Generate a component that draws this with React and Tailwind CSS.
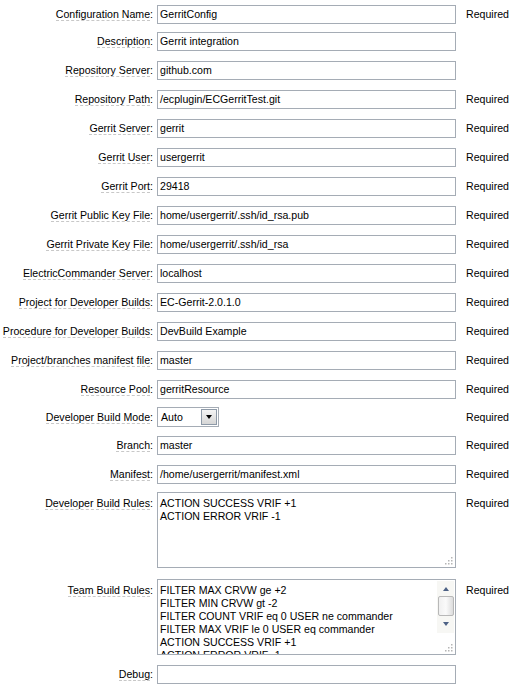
const rows = [
  { label: 'Configuration Name', value: 'GerritConfig', required: true, mt: 'mt-[5px]' },
  { label: 'Description', value: 'Gerrit integration', mt: 'mt-[8px]' },
  { label: 'Repository Server', value: 'github.com' },
  { label: 'Repository Path', value: '/ecplugin/ECGerritTest.git', required: true },
  { label: 'Gerrit Server', value: 'gerrit', required: true },
  { label: 'Gerrit User', value: 'usergerrit', required: true },
  { label: 'Gerrit Port', value: '29418', required: true },
  { label: 'Gerrit Public Key File', value: 'home/usergerrit/.ssh/id_rsa.pub', required: true },
  { label: 'Gerrit Private Key File', value: 'home/usergerrit/.ssh/id_rsa', required: true },
  { label: 'ElectricCommander Server', value: 'localhost', required: true },
  { label: 'Project for Developer Builds', value: 'EC-Gerrit-2.0.1.0', required: true },
  { label: 'Procedure for Developer Builds', value: 'DevBuild Example', required: true },
  { label: 'Project/branches manifest file', value: 'master', required: true },
  { label: 'Resource Pool', value: 'gerritResource', required: true },
  { label: 'Developer Build Mode', select: 'Auto', required: true, mt: 'mt-[8px]' },
  { label: 'Branch', value: 'master', required: true, mt: 'mt-[9px]' },
  { label: 'Manifest', value: '/home/usergerrit/manifest.xml', required: true },
]

const teamRules = [
  'FILTER MAX CRVW ge +2',
  'FILTER MIN CRVW gt -2',
  'FILTER COUNT VRIF eq 0 USER ne commander',
  'FILTER MAX VRIF le 0 USER eq commander',
  'ACTION SUCCESS VRIF +1',
  'ACTION ERROR VRIF -1',
]

export default function App() {
  return (
    <div
      className="w-[515px] h-[686px] bg-white text-black text-[10.6px] leading-[13px] overflow-hidden"
      style={{ fontFamily: '"Liberation Sans", Arial, sans-serif' }}
    >
      {rows.map((r) => (
        <Row key={r.label} label={r.label} required={r.required} className={r.mt || 'mt-[10px]'}>
          {r.select ? <Select value={r.select} /> : <Input value={r.value} />}
        </Row>
      ))}

      <Row label="Developer Build Rules" required top className="mt-[8px]">
        <div className="relative w-[299px] h-[76px] border border-[#a5acb5] px-[2px] pt-[4px]">
          <div>ACTION SUCCESS VRIF +1</div>
          <div>ACTION ERROR VRIF -1</div>
          <Grip />
        </div>
      </Row>

      <Row label="Team Build Rules" required top className="mt-[11px]">
        <div className="flex w-[299px] h-[76px] border border-[#a5acb5]">
          <div className="flex-1 overflow-hidden px-[2px] pt-[4px]">
            {teamRules.map((t) => (
              <div key={t} className="whitespace-nowrap">{t}</div>
            ))}
          </div>
          <div className="relative w-[18px] flex flex-col">
            <div className="mt-[1px] mr-[1px] h-[52px] bg-[#f7f7f4] flex flex-col items-center">
              <div className="h-[15px] flex items-center justify-center">
                <div className="w-0 h-0 border-x-[3px] border-x-transparent border-b-[4px] border-b-[#4d6185]" />
              </div>
              <div className="w-[16px] h-[20px] rounded-[2px] border border-[#b8b8b8] bg-gradient-to-r from-[#f0f0f0] via-[#fafafa] to-[#dcdcdc]" />
              <div className="h-[15px] flex items-center justify-center">
                <div className="w-0 h-0 border-x-[3px] border-x-transparent border-t-[4px] border-t-[#4d6185]" />
              </div>
            </div>
            <Grip />
          </div>
        </div>
      </Row>

      <Row label="Debug" className="mt-[10px]">
        <Input value="" />
      </Row>
    </div>
  )
}

function Row({ label, required, top, className, children }) {
  return (
    <div className={`flex ${top ? 'items-start' : 'items-center'} ${className}`}>
      <div className={`w-[153px] shrink-0 text-right whitespace-nowrap ${top ? 'pt-[5px]' : ''}`}>
        <span className="border-b border-dashed border-[#c8c8c8]">{label}</span>:
      </div>
      <div className="ml-[4px] w-[299px] shrink-0 flex">{children}</div>
      <div className={`ml-[10px] ${top ? 'pt-[5px]' : ''}`}>{required ? 'Required' : ''}</div>
    </div>
  )
}

function Input({ value }) {
  return (
    <div className="w-[299px] h-[19px] border border-[#a5acb5] px-[2px] flex items-center whitespace-nowrap overflow-hidden">
      {value}
    </div>
  )
}

function Select({ value }) {
  return (
    <div className="w-[62px] h-[20px] border border-[#a5acb5] flex items-center justify-between pl-[3px] pr-[1px]">
      <span>{value}</span>
      <div className="w-[16px] h-[16px] border border-[#8e9aa8] bg-gradient-to-b from-[#f4f4f4] to-[#d6d6d6] flex items-center justify-center">
        <div className="w-0 h-0 border-x-[3px] border-x-transparent border-t-[4px] border-t-black" />
      </div>
    </div>
  )
}

function Grip() {
  return (
    <svg width="9" height="9" viewBox="0 0 9 9" className="absolute right-[2px] bottom-[2px]">
      {[[7, 1], [4, 4], [7, 4], [1, 7], [4, 7], [7, 7]].map(([x, y]) => (
        <rect key={`${x}-${y}`} x={x} y={y} width="1.5" height="1.5" fill="#b5b5b5" />
      ))}
    </svg>
  )
}
